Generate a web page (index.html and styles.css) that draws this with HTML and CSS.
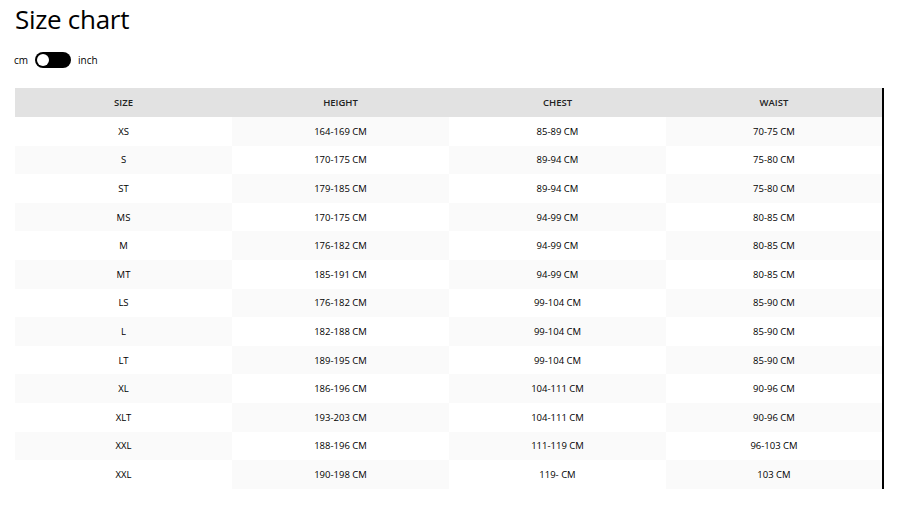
FILE: index.html
```html
<!DOCTYPE html>
<html>
<head>
<meta charset="utf-8">
<link rel="stylesheet" href="styles.css">
</head>
<body>
<div class="page">
  <h1 class="title">Size chart</h1>
  <div class="units">
    <span class="unit">cm</span>
    <span class="switch"><span class="knob"></span></span>
    <span class="unit">inch</span>
  </div>
  <table class="chart">
    <thead>
      <tr><th>SIZE</th><th>HEIGHT</th><th>CHEST</th><th>WAIST</th></tr>
    </thead>
    <tbody>
      <tr><td>XS</td><td>164-169 CM</td><td>85-89 CM</td><td>70-75 CM</td></tr>
      <tr><td>S</td><td>170-175 CM</td><td>89-94 CM</td><td>75-80 CM</td></tr>
      <tr><td>ST</td><td>179-185 CM</td><td>89-94 CM</td><td>75-80 CM</td></tr>
      <tr><td>MS</td><td>170-175 CM</td><td>94-99 CM</td><td>80-85 CM</td></tr>
      <tr><td>M</td><td>176-182 CM</td><td>94-99 CM</td><td>80-85 CM</td></tr>
      <tr><td>MT</td><td>185-191 CM</td><td>94-99 CM</td><td>80-85 CM</td></tr>
      <tr><td>LS</td><td>176-182 CM</td><td>99-104 CM</td><td>85-90 CM</td></tr>
      <tr><td>L</td><td>182-188 CM</td><td>99-104 CM</td><td>85-90 CM</td></tr>
      <tr><td>LT</td><td>189-195 CM</td><td>99-104 CM</td><td>85-90 CM</td></tr>
      <tr><td>XL</td><td>186-196 CM</td><td>104-111 CM</td><td>90-96 CM</td></tr>
      <tr><td>XLT</td><td>193-203 CM</td><td>104-111 CM</td><td>90-96 CM</td></tr>
      <tr><td>XXL</td><td>188-196 CM</td><td>111-119 CM</td><td>96-103 CM</td></tr>
      <tr><td>XXL</td><td>190-198 CM</td><td>119- CM</td><td>103 CM</td></tr>
    </tbody>
  </table>
</div>
</body>
</html>
```
FILE: styles.css
```css
* { box-sizing: border-box; }
html, body { margin: 0; padding: 0; background: #fff; }
body { font-family: "Open Sans", "Noto Sans", sans-serif; color: #000; }
.page { padding: 0 15px; }
.title {
  margin: 0;
  padding-top: 1px;
  font-size: 26px;
  font-weight: 400;
  line-height: 36px;
  letter-spacing: -0.3px;
}
.units {
  display: flex;
  align-items: center;
  gap: 7px;
  margin-top: 15px;
  height: 16px;
  font-size: 10px;
}
.unit { line-height: 16px; }
.unit:first-child { margin-left: -1px; }
.switch {
  display: flex;
  align-items: center;
  width: 36px;
  height: 16px;
  border-radius: 8px;
  background: #000;
  padding: 0 2px;
}
.knob {
  width: 12px;
  height: 12px;
  border-radius: 50%;
  background: #fff;
}
.chart {
  margin-top: 20px;
  width: 869px;
  border-collapse: collapse;
  table-layout: fixed;
  border-right: 2px solid #000;
  font-size: 9.5px;
}
.chart th, .chart td {
  text-align: center;
  height: 28.6px;
  padding: 0;
}
.chart th {
  background: #e2e2e2;
  font-weight: 600;
  color: #222;
  height: 29px;
}
.chart tbody tr:nth-child(odd) td:nth-child(even),
.chart tbody tr:nth-child(even) td:nth-child(odd) {
  background: #fafafa;
}
```
